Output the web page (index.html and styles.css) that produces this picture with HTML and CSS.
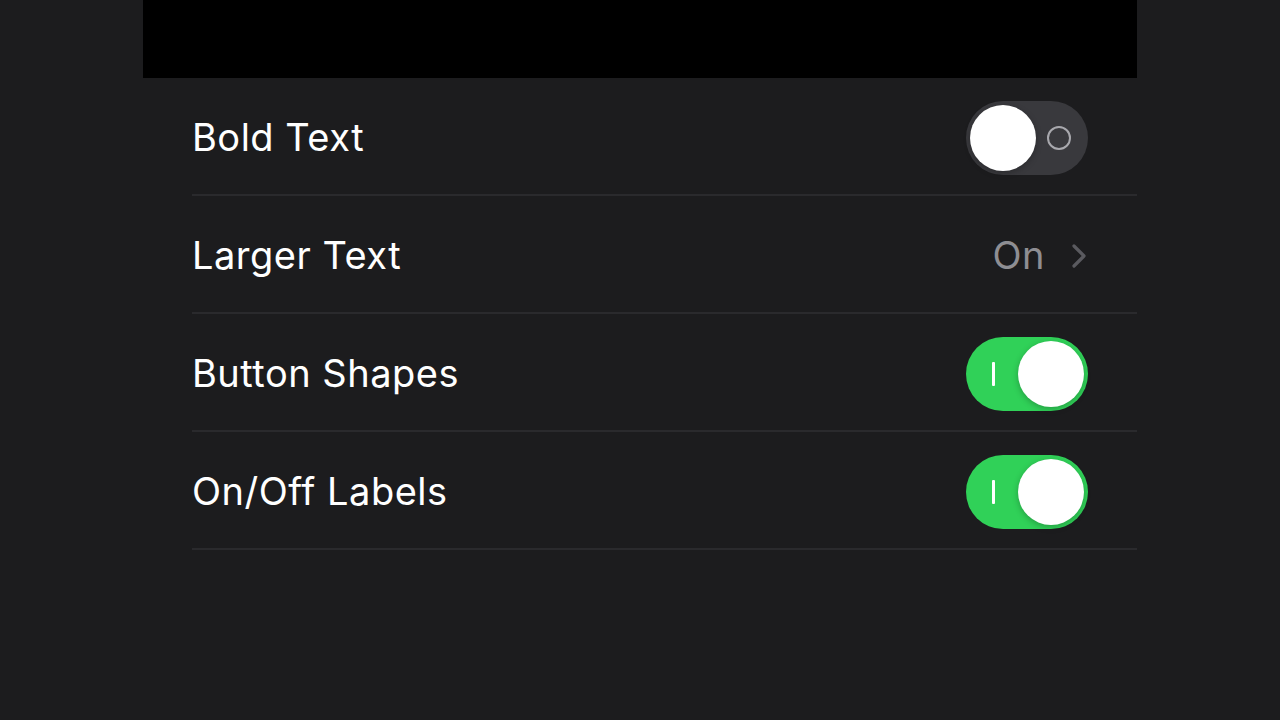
FILE: index.html
```html
<!DOCTYPE html>
<html>
<head>
<meta charset="utf-8">
<link rel="stylesheet" href="styles.css">
</head>
<body>
<div class="screen">
  <div class="topbar"></div>
  <div class="list">
    <div class="row">
      <span class="label">Bold Text</span>
      <div class="toggle off"><span class="knob"></span><span class="o-mark"></span></div>
    </div>
    <div class="row">
      <span class="label">Larger Text</span>
      <div class="detail"><span class="value">On</span>
        <svg class="chev" width="16" height="26" viewBox="0 0 16 26"><path d="M3 3 L13 13 L3 23" fill="none" stroke="#5a5a5f" stroke-width="3.2" stroke-linecap="round" stroke-linejoin="round"/></svg>
      </div>
    </div>
    <div class="row">
      <span class="label">Button Shapes</span>
      <div class="toggle on"><span class="i-mark"></span><span class="knob"></span></div>
    </div>
    <div class="row">
      <span class="label">On/Off Labels</span>
      <div class="toggle on"><span class="i-mark"></span><span class="knob"></span></div>
    </div>
  </div>
</div>
</body>
</html>
```

FILE: styles.css
```css
* { box-sizing: border-box; }
html, body { margin: 0; padding: 0; }
body {
  width: 1280px;
  height: 720px;
  background: #1c1c1e;
  font-family: Inter, "Liberation Sans", sans-serif;
  overflow: hidden;
}
.screen {
  width: 994px;
  margin-left: 143px;
}
.topbar {
  height: 78px;
  background: #000;
}
.list {
  padding-left: 49px;
}
.row {
  height: 118px;
  border-bottom: 2px solid #2a2a2d;
  display: flex;
  align-items: center;
  justify-content: space-between;
  padding-right: 49px;
  padding-top: 3px;
}
.label {
  color: #fff;
  font-size: 38px;
  letter-spacing: 0.5px;
  margin-top: -2px;
}
.toggle {
  width: 122px;
  height: 74px;
  border-radius: 37px;
  position: relative;
  display: flex;
  align-items: center;
}
.toggle.off { background: #39393d; }
.toggle.on { background: #30d158; justify-content: flex-end; }
.knob {
  width: 66px;
  height: 66px;
  border-radius: 50%;
  background: #fff;
  box-shadow: 0 2px 6px rgba(0,0,0,0.25);
  margin: 0 4px;
}
.o-mark {
  position: absolute;
  left: 81px;
  top: 25px;
  width: 24px;
  height: 24px;
  border: 2.5px solid #a8a8ad;
  border-radius: 50%;
}
.i-mark {
  position: absolute;
  left: 26px;
  top: 25px;
  width: 2.5px;
  height: 24px;
  background: #fff;
  border-radius: 1px;
}
.detail {
  display: flex;
  align-items: center;
  gap: 26px;
}
.value {
  color: #8e8e93;
  font-size: 38px;
  letter-spacing: 0.5px;
  margin-top: -2px;
}
.chev { display: block; margin-right: 1px; }
```
